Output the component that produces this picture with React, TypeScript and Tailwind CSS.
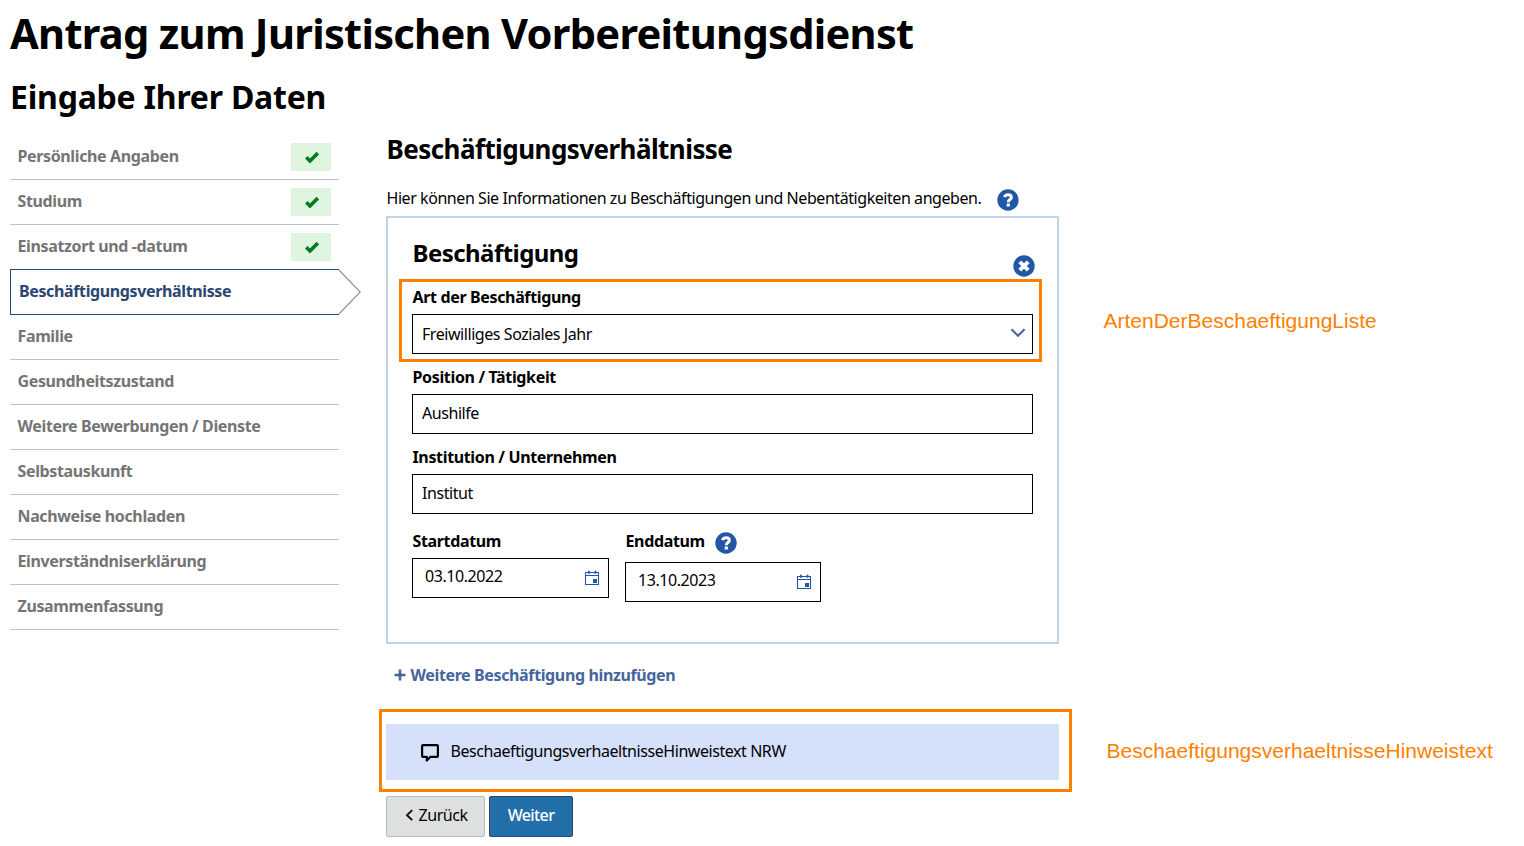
import React from 'react';

type Step = { label: string; state: 'done' | 'active' | 'open' };

const STEPS: Step[] = [
  { label: 'Persönliche Angaben', state: 'done' },
  { label: 'Studium', state: 'done' },
  { label: 'Einsatzort und -datum', state: 'done' },
  { label: 'Beschäftigungsverhältnisse', state: 'active' },
  { label: 'Familie', state: 'open' },
  { label: 'Gesundheitszustand', state: 'open' },
  { label: 'Weitere Bewerbungen / Dienste', state: 'open' },
  { label: 'Selbstauskunft', state: 'open' },
  { label: 'Nachweise hochladen', state: 'open' },
  { label: 'Einverständniserklärung', state: 'open' },
  { label: 'Zusammenfassung', state: 'open' },
];

export default function App() {
  return (
    <div className="h-[846px] w-[1524px] overflow-hidden bg-white pl-2.5 font-['Noto_Sans',sans-serif] text-[16px] tracking-[-0.44px] text-black">
      <h1 className="h-[66px] whitespace-nowrap text-[41.6px] font-bold leading-[66px] tracking-[-0.7px]">
        Antrag zum Juristischen Vorbereitungsdienst
      </h1>
      <h2 className="h-[69px] whitespace-nowrap text-[32px] font-bold leading-[62px] tracking-[-0.22px]">Eingabe Ihrer Daten</h2>

      <div className="flex">
        <nav className="w-[329px] shrink-0 tracking-[-0.37px]">
          {STEPS.map(step => <StepItem key={step.label} step={step} />)}
        </nav>

        <main className="ml-[47px] w-[673px] shrink-0">
          <h3 className="whitespace-nowrap pl-[0.5px] text-[26px] font-bold leading-7 tracking-[-0.56px]">Beschäftigungsverhältnisse</h3>
          <div className="flex h-[53px] items-end">
            <p className="w-[611px] whitespace-nowrap pb-1.5 pl-[0.5px] leading-6">
              Hier können Sie Informationen zu Beschäftigungen und Nebentätigkeiten angeben.
            </p>
            <HelpIcon className="mb-[5.5px] size-[22px]" />
          </div>

          <EmploymentPanel />

          <button className="ml-2 mt-[19px] flex h-6 items-center gap-[4.5px] whitespace-nowrap font-bold tracking-[-0.37px] text-[#45659c]">
            <svg className="size-3" viewBox="0 0 12 12" stroke="currentColor" strokeWidth="2.6">
              <path d="M6 .5v11M.5 6h11" />
            </svg>
            Weitere Beschäftigung hinzufügen
          </button>

          {/* Notice text */}
          <div className="relative mt-[37px] flex h-14 items-center bg-[#d5e0fa] pl-[35px]">
            <CommentIcon />
            <span className="ml-[11.5px] whitespace-nowrap pb-0.5">BeschaeftigungsverhaeltnisseHinweistext NRW</span>
            <div className="absolute -left-[7px] -top-[15px] h-[83px] w-[693px] border-3 border-[#ff8000]" />
          </div>

          <div className="mt-4 flex gap-1">
            <button className="flex h-[41px] w-[99px] items-center rounded-[2px] border border-[#afbecb] bg-[#dde0df] pb-[3px] pl-[17.5px]">
              <svg className="mr-1.5 h-3 w-2" viewBox="0 0 8 12" fill="none" stroke="currentColor" strokeWidth="1.8">
                <path d="M7.2 1.2 2 6.2l5.2 5" />
              </svg>
              Zurück
            </button>
            <button className="h-[41px] w-[84px] rounded-[2px] border border-[#2b4670] bg-[#226fa9] pb-[3px] font-medium tracking-[-0.6px] text-white">
              Weiter
            </button>
          </div>
        </main>

        <aside className="whitespace-nowrap pl-[44.5px] font-['Liberation_Sans',sans-serif] text-[21px] leading-6 tracking-normal text-[#ff8000]">
          <p className="mt-[174px]">ArtenDerBeschaeftigungListe</p>
          <p className="ml-[3px] mt-[406px]">BeschaeftigungsverhaeltnisseHinweistext</p>
        </aside>
      </div>
    </div>
  );
}

function StepItem({ step }: { step: Step }) {
  if (step.state === 'active') {
    return (
      <div className="relative -mt-px flex h-[46px] items-center border border-r-0 border-[#2b4670] pb-0.5 pl-2 font-bold text-[#2b4670]">
        {step.label}
        <svg className="absolute -right-[22px] -top-px h-[46px] w-[23px]" viewBox="0 0 23 46" fill="none" stroke="#8795ad" strokeWidth="1.2">
          <path d="M.5.5 22.2 23 .5 45.5" />
        </svg>
      </div>
    );
  }
  return (
    <div className="flex h-[45px] items-center justify-between border-b border-[#b8c6d3] pl-[7.5px] pr-2 font-bold text-[#757575]">
      <span className="pb-0.5">{step.label}</span>
      {step.state === 'done' && (
        <span className="flex h-7 w-10 items-center justify-center bg-[#dff5df] pl-0.5">
          <svg className="size-3.5" viewBox="0 0 14 14" fill="none" stroke="#087a20" strokeWidth="3.6">
            <path d="m1.3 7.2 3.7 3.8 7.8-7.9" />
          </svg>
        </span>
      )}
    </div>
  );
}

function EmploymentPanel() {
  return (
    <section className="h-[428px] border-2 border-[#c1d4e6] px-6 pt-[19px]">
      <div className="flex h-[47px] justify-between">
        <h4 className="pl-[0.5px] text-[24px] font-bold leading-8 tracking-[-0.55px]">Beschäftigung</h4>
        <RemoveIcon className="-mr-[1.5px] mt-[17.5px] size-[22px]" />
      </div>

      <div className="relative h-[70px]">
        <FieldLabel text="Art der Beschäftigung" />
        <div className="flex h-10 items-center justify-between border border-black pl-[9px] pr-[6.5px]">
          <span>Freiwilliges Soziales Jahr</span>
          <svg className="mb-0.5 h-2.5 w-4" viewBox="0 0 16 10" fill="none" stroke="#45659c" strokeWidth="2">
            <path d="m1.5 1.2 6.5 6.6 6.5-6.6" />
          </svg>
        </div>
        <div className="absolute -left-[13px] -top-[5px] h-[83px] w-[643px] border-3 border-[#ff8000]" />
      </div>

      <div className="mt-2.5">
        <FieldLabel text="Position / Tätigkeit" />
        <TextField value="Aushilfe" />
      </div>
      <div className="mt-2.5">
        <FieldLabel text="Institution / Unternehmen" />
        <TextField value="Institut" />
      </div>

      <div className="mt-3.5 flex items-start gap-4">
        <div className="w-[197px]">
          <FieldLabel text="Startdatum" />
          <DateField value="03.10.2022" />
        </div>
        <div className="w-[196px]">
          <div className="flex gap-[11px] pb-1">
            <FieldLabel text="Enddatum" />
            <HelpIcon className="-ml-px mt-[3.5px] size-[22px]" />
          </div>
          <DateField value="13.10.2023" />
        </div>
      </div>
    </section>
  );
}

function FieldLabel({ text }: { text: string }) {
  return <div className="h-[30px] whitespace-nowrap pl-[0.5px] font-bold leading-[26px] tracking-[-0.35px]">{text}</div>;
}

function TextField({ value }: { value: string }) {
  return <div className="flex h-10 items-center border border-black pb-0.5 pl-[9px]">{value}</div>;
}

function DateField({ value }: { value: string }) {
  return (
    <div className="flex h-10 items-center justify-between border border-black pl-3 pr-2">
      <span className="pb-1">{value}</span>
      <svg className="size-4" viewBox="0 0 16 16" fill="none" stroke="#2257a6">
        <path d="M1.5 2.5h13v12h-13zM1.5 5.5h13" strokeWidth="1.1" />
        <path d="M5 .8v3M11.5.8v3" strokeWidth="1.8" />
        <path d="M9 9h4v4H9z" fill="#2257a6" stroke="none" />
      </svg>
    </div>
  );
}

function HelpIcon({ className }: { className: string }) {
  return (
    <svg className={className} viewBox="0 0 22 22" fill="none" stroke="white">
      <circle cx="11" cy="11" r="10.7" fill="#2257a6" stroke="none" />
      <path d="M7.5 8.2C8 6.4 9.3 5.7 11 5.7c2 0 3.3 1 3.3 2.7 0 2.2-3 2-3 4.8" strokeWidth="3" />
      <path d="M9.7 14.5h3.2v3H9.7z" fill="white" stroke="none" />
    </svg>
  );
}

function RemoveIcon({ className }: { className: string }) {
  return (
    <svg className={className} viewBox="0 0 22 22">
      <circle cx="11" cy="11" r="10.7" fill="#2257a6" />
      <path d="m6.8 6.8 8.4 8.4M15.2 6.8l-8.4 8.4" stroke="white" strokeWidth="4" />
    </svg>
  );
}

function CommentIcon() {
  return (
    <svg className="mt-px size-[18px]" viewBox="0 0 18 18" fill="none" stroke="black" strokeWidth="2.2" strokeLinejoin="round">
      <path d="M2 1.2h14q.9 0 .9.9v9.8q0 .9-.9.9H9.5L5.8 16.5v-3.7H2q-.9 0-.9-.9V2.1q0-.9.9-.9z" />
    </svg>
  );
}
